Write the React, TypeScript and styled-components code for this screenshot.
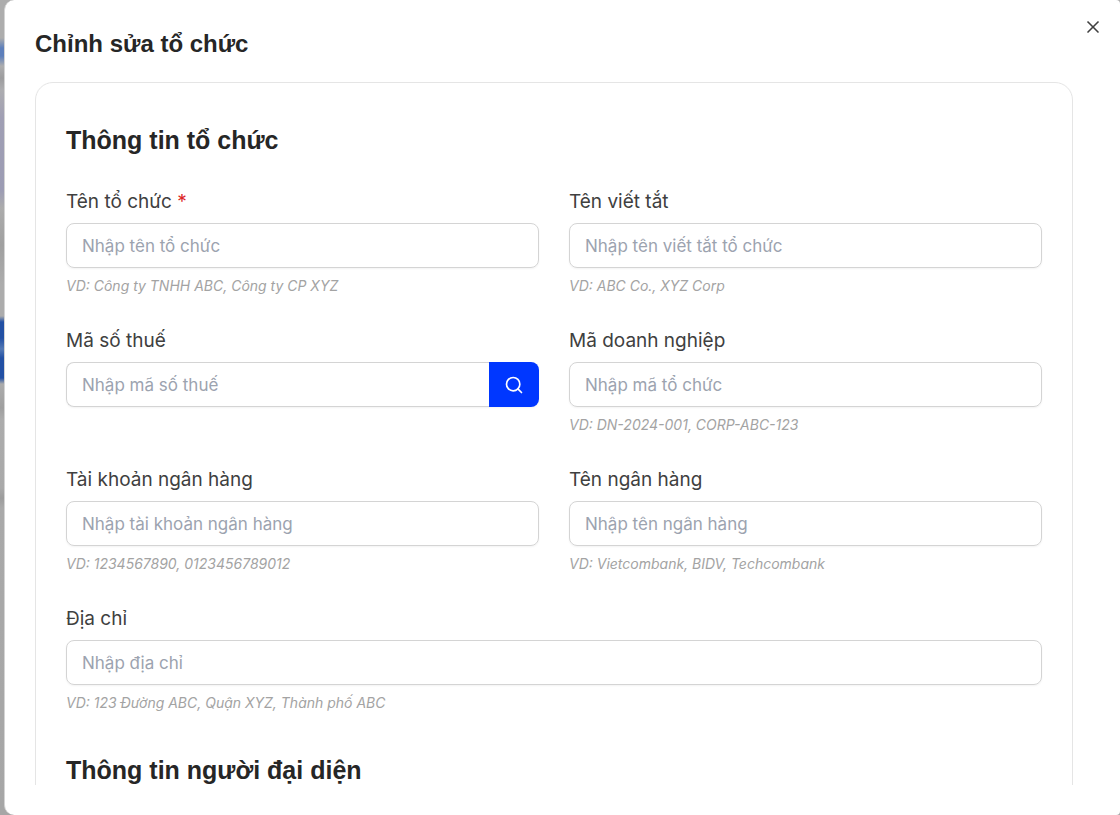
import React, { useId } from "react";
import styled, { createGlobalStyle } from "styled-components";
import { Search, X } from "lucide-react";

const GlobalStyle = createGlobalStyle`
  *, *::before, *::after { box-sizing: border-box; }
  body { margin: 0; font-family: Inter, "Noto Sans", sans-serif; color: #404040; }
  h1, h2, p { margin: 0; }
`;

const Backdrop = styled.div`
  height: 100vh;
  padding-left: 4px;
  background: linear-gradient(
    to bottom,
    #adadad 0, #adadad 38px,
    #5d7fbb 48px, #5d7fbb 56px,
    #adadae 66px, #9c9c9e 78px, #adadb0 90px,
    #a09fb4 118px, #9c9cb4 190px,
    #acacac 208px, #a0a0a0 245px, #acacac 285px, #acacac 316px,
    #2250a4 322px, #2250a4 338px, #5479b5 349px, #2250a4 358px, #2250a4 378px,
    #acacac 384px, #9f9f9f 408px, #acacac 420px,
    #a9a9a9 488px, #9c9c9c 498px, #a9a9a9 508px,
    #a6a6a6 100%
  );
`;

const Dialog = styled.section`
  position: relative;
  display: flex;
  flex-direction: column;
  height: 100%;
  padding: 28px 47px 30px 30px;
  border-left: 1px solid #d4d4d4;
  border-radius: 10px 4px 4px 10px;
  background: #fff;
`;

const CloseButton = styled.button`
  position: absolute;
  top: 17px;
  right: 17px;
  display: flex;
  padding: 0;
  border: 0;
  background: transparent;
  color: #404040;
  cursor: pointer;
`;

const Title = styled.h1`
  color: #262626;
  font: 700 24px/32px "Liberation Sans", Arial, sans-serif;
`;

const Body = styled.div`
  flex: 1;
  min-height: 0;
  margin-top: 22px;
  overflow-y: auto;
  scrollbar-width: none;
`;

const Card = styled.form`
  display: flex;
  flex-direction: column;
  gap: 41px;
  padding: 41px 30px 40px;
  border: 1px solid #e5e5e5;
  border-radius: 18px;
  box-shadow: 0 1px 2px rgba(0, 0, 0, 0.05);
`;

const SectionTitle = styled.h2`
  color: #262626;
  font: 700 25px/32px "Liberation Sans", Arial, sans-serif;
`;

const Fields = styled.div`
  display: grid;
  grid-template-columns: 1fr 1fr;
  gap: 32px 30px;
  margin-top: 33px;
`;

const FieldBox = styled.div<{ $wide?: boolean }>`
  display: flex;
  flex-direction: column;
  gap: 8px;
  grid-column: ${(p) => (p.$wide ? "1 / -1" : "auto")};
`;

const Label = styled.label`
  font-size: 19px;
  font-weight: 400;
  line-height: 26px;
`;

const Required = styled.span`
  color: #dc2626;
`;

const Control = styled.div`
  display: flex;
  height: 45px;
  border-radius: 8px;
  box-shadow: 0 1px 2px rgba(0, 0, 0, 0.05);
`;

const Input = styled.input<{ $joined?: boolean }>`
  flex: 1;
  min-width: 0;
  padding: 0 15px;
  border: 1px solid #d4d4d4;
  border-right-width: ${(p) => (p.$joined ? "0" : "1px")};
  border-radius: ${(p) => (p.$joined ? "8px 0 0 8px" : "8px")};
  background: #fff;
  color: #262626;
  font: 400 17px Inter, "Noto Sans", sans-serif;
  &::placeholder { color: #9ca3af; opacity: 1; }
`;

const SearchButton = styled.button`
  display: flex;
  align-items: center;
  justify-content: center;
  width: 50px;
  padding: 0;
  border: 0;
  border-radius: 0 8px 8px 0;
  background: #0037ff;
  color: #fff;
  cursor: pointer;
`;

const Hint = styled.p`
  color: #a3a3a3;
  font-size: 14px;
  font-style: italic;
  line-height: 20px;
`;

type FieldProps = {
  label: string;
  placeholder: string;
  hint?: string;
  required?: boolean;
  wide?: boolean;
  searchable?: boolean;
};

function Field({ label, placeholder, hint, required, wide, searchable }: FieldProps) {
  const id = useId();
  return (
    <FieldBox $wide={wide}>
      <Label htmlFor={id}>
        {label}
        {required && <Required> *</Required>}
      </Label>
      <Control>
        <Input id={id} placeholder={placeholder} required={required} $joined={searchable} />
        {searchable && (
          <SearchButton type="button" aria-label="Tìm kiếm">
            <Search size={20} strokeWidth={2} />
          </SearchButton>
        )}
      </Control>
      {hint && <Hint>{hint}</Hint>}
    </FieldBox>
  );
}

export default function App() {
  return (
    <>
      <GlobalStyle />
      <Backdrop>
        <Dialog role="dialog" aria-labelledby="dialog-title">
          <Title id="dialog-title">Chỉnh sửa tổ chức</Title>
          <CloseButton type="button" aria-label="Đóng">
            <X size={20} strokeWidth={2} />
          </CloseButton>
          <Body>
            <Card>
              <section>
                <SectionTitle>Thông tin tổ chức</SectionTitle>
                <Fields>
                  <Field label="Tên tổ chức" placeholder="Nhập tên tổ chức" hint="VD: Công ty TNHH ABC, Công ty CP XYZ" required />
                  <Field label="Tên viết tắt" placeholder="Nhập tên viết tắt tổ chức" hint="VD: ABC Co., XYZ Corp" />
                  <Field label="Mã số thuế" placeholder="Nhập mã số thuế" searchable />
                  <Field label="Mã doanh nghiệp" placeholder="Nhập mã tổ chức" hint="VD: DN-2024-001, CORP-ABC-123" />
                  <Field label="Tài khoản ngân hàng" placeholder="Nhập tài khoản ngân hàng" hint="VD: 1234567890, 0123456789012" />
                  <Field label="Tên ngân hàng" placeholder="Nhập tên ngân hàng" hint="VD: Vietcombank, BIDV, Techcombank" />
                  <Field label="Địa chỉ" placeholder="Nhập địa chỉ" hint="VD: 123 Đường ABC, Quận XYZ, Thành phố ABC" wide />
                </Fields>
              </section>
              <section>
                <SectionTitle>Thông tin người đại diện</SectionTitle>
              </section>
            </Card>
          </Body>
        </Dialog>
      </Backdrop>
    </>
  );
}
